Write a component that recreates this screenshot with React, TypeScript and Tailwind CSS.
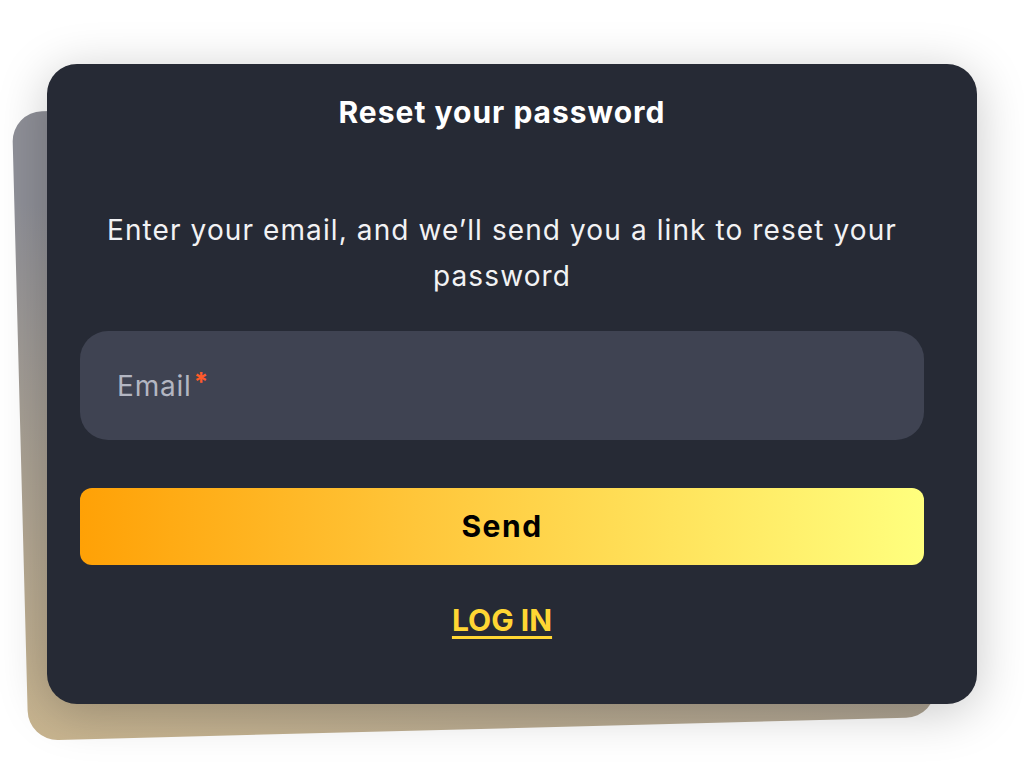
import React from "react";

export default function App() {
  return (
    <div
      className="relative w-[1024px] h-[768px] overflow-hidden bg-white"
      style={{ fontFamily: "Inter, 'Noto Sans', sans-serif" }}
    >
      <div className="absolute left-[20px] top-[100px] w-[908px] h-[629px] rounded-[30px] -rotate-[1.5deg] bg-[linear-gradient(195deg,#8e8f97_38%,#c9b58f_100%)]" />
      <div className="relative pt-[64px] pl-[47px]">
        <div className="w-[930px] h-[640px] rounded-[30px] bg-[#262a35] shadow-[0_8px_50px_rgba(0,0,0,0.22)] pt-[30px] pl-[33px] pr-[53px] flex flex-col items-stretch">
          <h1 className="text-center text-white font-bold text-[30px] leading-[36px] tracking-[1px]">
            Reset your password
          </h1>
          <p className="mt-[77px] mx-auto max-w-[820px] text-center text-[#f2f2f4] text-[28px] leading-[46px] tracking-[1.1px]">
            Enter your email, and we’ll send you a link to reset your password
          </p>
          <div className="mt-[32px] h-[109px] rounded-[28px] bg-[#3f4352] flex items-center pl-[37px]">
            <span className="text-[28px] text-[#b3b6c2] tracking-[0.8px]">Email</span>
            <span className="text-[26px] font-bold text-[#ff5a2a] ml-[2px] -mt-[8px]">*</span>
          </div>
          <button className="mt-[48px] h-[77px] rounded-[12px] bg-[linear-gradient(90deg,#ffa106_0%,#ffc63a_40%,#ffe35c_70%,#ffff7e_100%)] text-black font-bold text-[30px] tracking-[1.5px]">
            Send
          </button>
          <div className="mt-[37px] text-center">
            <a className="text-[#ffd633] font-bold text-[30px] leading-[36px] underline underline-offset-[5px] decoration-[3px]">
              LOG IN
            </a>
          </div>
        </div>
      </div>
    </div>
  );
}
